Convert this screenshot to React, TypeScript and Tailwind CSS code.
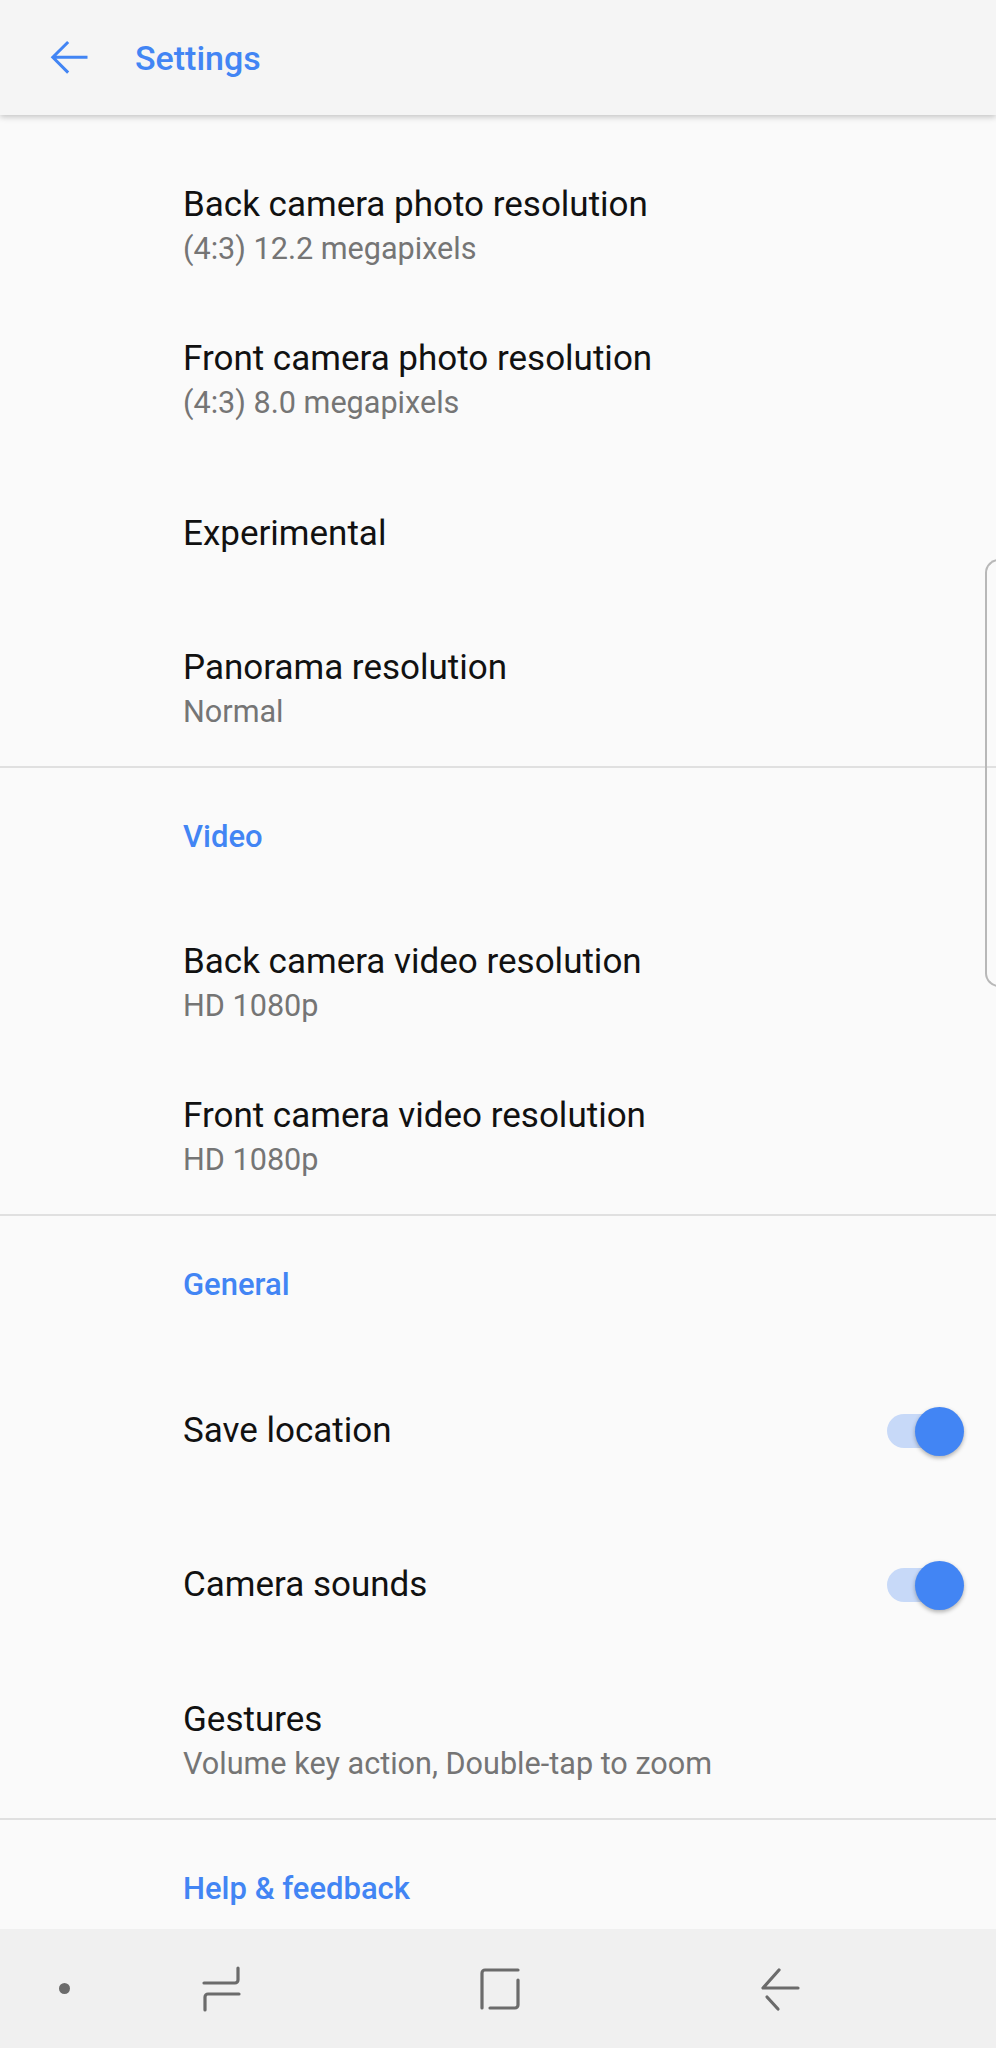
import React from "react";

const font = { fontFamily: "Roboto, 'Noto Sans', 'Liberation Sans', sans-serif" };

function Item({ title, sub }: { title: string; sub?: string }) {
  return (
    <div className="h-[154px] flex flex-col justify-center pl-[183px]">
      <div className="text-[35px] leading-[44px] text-[#111111]">{title}</div>
      {sub && <div className="text-[30.6px] leading-[43px] text-[#757575]">{sub}</div>}
    </div>
  );
}

function ToggleItem({ title }: { title: string }) {
  return (
    <div className="h-[154px] flex items-center pl-[183px] pr-[32px]">
      <div className="flex-1 text-[35px] leading-[44px] text-[#111111]">{title}</div>
      <div className="relative w-[77px] h-[49px] flex items-center">
        <div className="w-[70px] h-[34px] rounded-full bg-[#c7d9f8]" />
        <div className="absolute right-0 top-0 w-[49px] h-[49px] rounded-full bg-[#4285f4] shadow-[0_2px_4px_rgba(0,0,0,0.3)]" />
      </div>
    </div>
  );
}

function Category({ title }: { title: string }) {
  return (
    <div className="h-[138px] flex items-center pl-[183px]">
      <div className="text-[31px] leading-[40px] font-medium text-[#4285f4]">{title}</div>
    </div>
  );
}

function Divider() {
  return <div className="h-[2px] bg-[#e0e0e0]" />;
}

export default function App() {
  return (
    <div className="relative w-[996px] h-[2048px] flex flex-col bg-[#fafafa] overflow-hidden" style={font}>
      <div className="relative z-10 h-[115px] shrink-0 bg-[#f5f5f5] flex items-center shadow-[0_2px_6px_rgba(0,0,0,0.22)]">
        <svg className="ml-[40px] -mt-[1px]" width="57" height="57" viewBox="0 0 24 24">
          <path d="M20 11.3H6.9l5.4-5.4-0.9-0.9-6.9 6.9 6.9 6.9 0.9-0.9-5.4-5.4H20z" fill="#4285f4" />
        </svg>
        <div className="ml-[38px] text-[34px] leading-[40px] font-medium text-[#4285f4]">Settings</div>
      </div>

      <div className="flex-1 overflow-hidden pt-[34px]">
        <Item title="Back camera photo resolution" sub="(4:3) 12.2 megapixels" />
        <Item title="Front camera photo resolution" sub="(4:3) 8.0 megapixels" />
        <Item title="Experimental" />
        <div className="pt-[1px]">
          <Item title="Panorama resolution" sub="Normal" />
        </div>
        <Divider />
        <Category title="Video" />
        <Item title="Back camera video resolution" sub="HD 1080p" />
        <Item title="Front camera video resolution" sub="HD 1080p" />
        <Divider />
        <Category title="General" />
        <ToggleItem title="Save location" />
        <ToggleItem title="Camera sounds" />
        <div className="pt-[2px]">
          <Item title="Gestures" sub="Volume key action, Double-tap to zoom" />
        </div>
        <Divider />
        <Category title="Help & feedback" />
      </div>

      <div className="h-[119px] shrink-0 bg-[#f0f0f0] flex items-center">
        <div className="ml-[59px] w-[11px] h-[11px] rounded-full bg-[#6b6b6b]" />
        <svg className="ml-[131px]" width="42" height="46" viewBox="0 0 42 46" fill="none" stroke="#6b6b6b" strokeWidth="3.2" strokeLinecap="round">
          <path d="M3 17 H34 A3 3 0 0 0 37 14 V2" />
          <path d="M38 28 H7 A3 3 0 0 0 4 31 V44" />
        </svg>
        <svg className="ml-[236px]" width="42" height="46" viewBox="0 0 42 46" fill="none" stroke="#6b6b6b" strokeWidth="3.2" strokeLinecap="round">
          <path d="M39 4 H6 A3 3 0 0 0 3 7 V42" />
          <path d="M39 14 V39 A3 3 0 0 1 36 42 H11" />
        </svg>
        <svg className="ml-[238px]" width="42" height="46" viewBox="0 0 42 46" fill="none" stroke="#6b6b6b" strokeWidth="3.2" strokeLinecap="round" strokeLinejoin="round">
          <path d="M20 4 L4 22 H39" />
          <path d="M8 31 L19 43" />
        </svg>
      </div>

      <div className="absolute right-[-4px] top-[559px] w-[15px] h-[428px] rounded-l-[14px] border-l-2 border-t-2 border-b-2 border-[#b8b8b8]" />
    </div>
  );
}
